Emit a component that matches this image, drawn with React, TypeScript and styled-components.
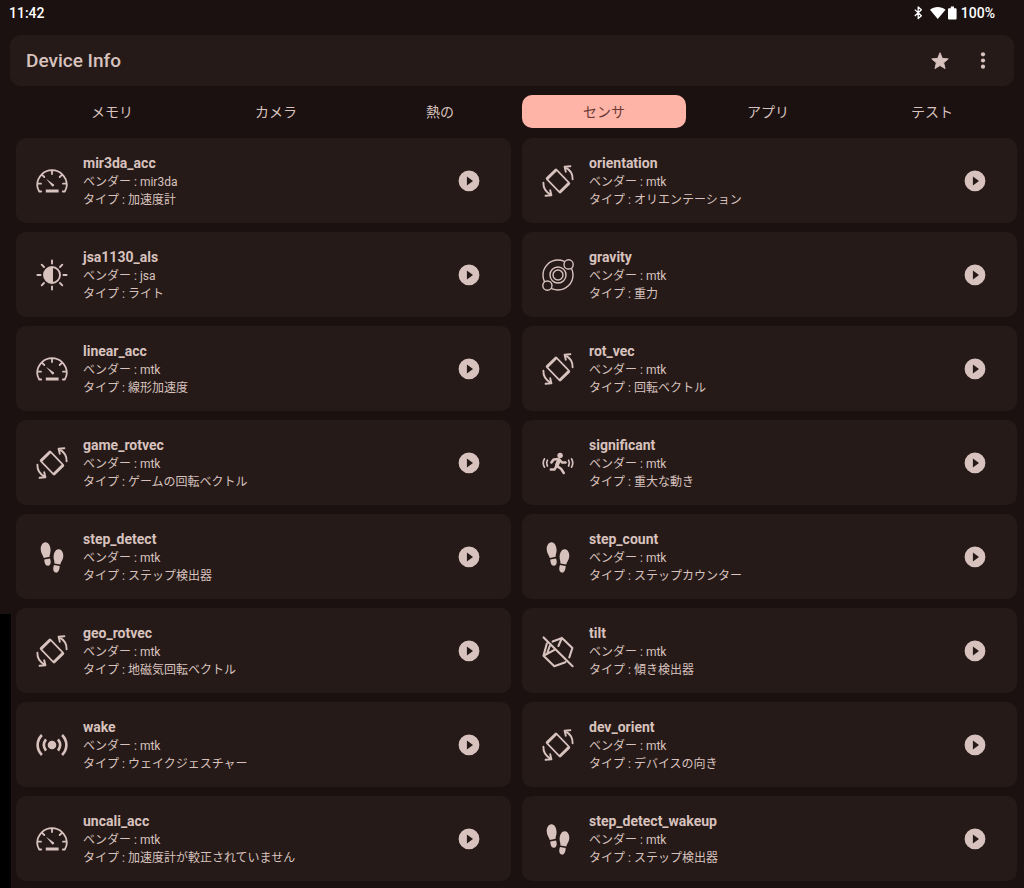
import React from "react";
import styled, { createGlobalStyle } from "styled-components";

const color = {
  page: "#1b1110",
  card: "#251a18",
  text: "#d8c2be",
  accent: "#ffb4a8",
  onAccent: "#6b3a34",
};

const GlobalStyle = createGlobalStyle`
  * { box-sizing: border-box; }
  body {
    margin: 0;
    background: ${color.page};
    color: ${color.text};
    font-family: Roboto, "Noto Sans CJK JP", sans-serif;
  }
  button { font: inherit; color: inherit; background: none; border: 0; padding: 0; cursor: pointer; }
  svg { display: block; }
`;

const Page = styled.div`
  position: relative;
  min-height: 100vh;
  overflow: hidden;
`;

const EdgeStrip = styled.div`
  position: absolute;
  left: 0;
  bottom: 0;
  width: 11px;
  height: 274px;
  background: #000;
`;

const StatusBar = styled.div`
  display: flex;
  align-items: center;
  justify-content: space-between;
  height: 26px;
  padding: 0 29px 0 9px;
  color: #fff;
  font-size: 14px;
  font-weight: 500;
`;

const StatusIcons = styled.div`
  display: flex;
  align-items: center;
  gap: 4px;
`;

const AppBar = styled.header`
  display: flex;
  align-items: center;
  height: 51px;
  margin: 9px 10px 0;
  padding: 0 20px 0 16px;
  border-radius: 10px;
  background: ${color.card};
`;

const Title = styled.h1`
  flex: 1;
  margin: 0;
  font-size: 19px;
  line-height: 24px;
  font-weight: 500;
`;

const Actions = styled.div`
  display: flex;
  gap: 21px;
`;

const IconButton = styled.button`
  display: grid;
  place-items: center;
  width: 22px;
  height: 22px;
`;

const Tabs = styled.nav`
  display: grid;
  grid-template-columns: repeat(6, 1fr);
  margin: 9px 10px 0 30px;
`;

const Tab = styled.button<{ $active?: boolean }>`
  && {
    height: 33px;
    border-radius: 10px;
    font-size: 14px;
    line-height: 20px;
    background: ${(p) => (p.$active ? color.accent : "transparent")};
    color: ${(p) => (p.$active ? color.onAccent : color.text)};
  }
`;

const Grid = styled.main`
  display: grid;
  grid-template-columns: repeat(2, 1fr);
  gap: 9px 11px;
  padding: 10px 7px 7px 16px;
`;

const Card = styled.article`
  display: flex;
  align-items: center;
  height: 85px;
  padding: 0 31px 0 20px;
  border-radius: 10px;
  background: ${color.card};
`;

const Details = styled.div`
  flex: 1;
  margin-left: 15px;
  padding-top: 2px;
`;

const Name = styled.h2`
  margin: 0;
  font-size: 14px;
  line-height: 19px;
  font-weight: 700;
`;

const Line = styled.p`
  margin: 0;
  font-size: 12px;
  line-height: 18px;
`;

const stroke = { fill: "none", stroke: "currentColor", strokeLinecap: "round", strokeLinejoin: "round" } as const;

type Kind = "gauge" | "rotate" | "light" | "gravity" | "run" | "steps" | "tilt" | "wake";

const drawings: Record<Kind, React.ReactNode> = {
  gauge: (
    <>
      <path {...stroke} strokeWidth="1.8" d="M5.2 26.5 H3.2 C1.8 24.2 1.2 22 1.2 20 A14.8 14.8 0 0 1 30.8 20 C30.8 22 30.2 24.2 28.8 26.5 H26.8 M16 5.4 V9 M1.5 18.7 H5 M30.5 18.7 H27 M5.9 9.6 L8.3 12 M26.1 9.6 L23.7 12" />
      <path fill="currentColor" d="M10 13.8 L18 19.4 A1.4 1.4 0 0 1 16.1 21.3Z M9.8 24.6 H22.6 V27.6 H9.8Z" />
    </>
  ),
  rotate: (
    <>
      <path fill="currentColor" fillRule="evenodd" transform="rotate(-44 16 16)" d="M10.2 5.2 H21.8 A1.8 1.8 0 0 1 23.6 7 V25 A1.8 1.8 0 0 1 21.8 26.8 H10.2 A1.8 1.8 0 0 1 8.4 25 V7 A1.8 1.8 0 0 1 10.2 5.2Z M10.2 8.2 V23.8 H21.8 V8.2Z" />
      <path {...stroke} strokeWidth="1.9" d="M30.6 14.3 C30.8 9.5 28 4.8 23 2.2 M28.4 1.2 L22.6 1.7 L23.8 6.8 M1.4 17.7 C1.2 22.5 4 27.2 9 29.8 M3.6 30.8 L9.4 30.3 L8.2 25.2" />
    </>
  ),
  light: (
    <>
      <circle {...stroke} cx="16" cy="16" r="8" strokeWidth="1.9" />
      <path fill="currentColor" d="M17 8 H16 A8 8 0 0 0 16 24 H17Z" />
      <path {...stroke} strokeWidth="1.9" d="M16 1.4 V4.6 M16 27.4 V30.6 M1.4 16 H4.6 M27.4 16 H30.6 M5.7 5.7 L8 8 M24 24 L26.3 26.3 M26.3 5.7 L24 8 M5.7 26.3 L8 24" />
    </>
  ),
  gravity: (
    <g {...stroke} strokeWidth="1.4">
      <circle cx="16" cy="16" r="15" />
      <circle cx="16" cy="16" r="8" />
      <circle cx="16" cy="16" r="5" />
      <circle cx="26.6" cy="5.4" r="4.6" fill={color.card} />
      <circle cx="5.4" cy="26.6" r="4.6" fill={color.card} />
    </g>
  ),
  run: (
    <>
      <circle cx="18.1" cy="8.4" r="2.7" fill="currentColor" />
      <path {...stroke} strokeWidth="2.5" d="M16 12 L11.8 12.4 L9.4 15.4 M18 13.4 L20.2 15.6 H23.6 M14.2 19.4 L12.6 22.5 H8.8 M15.8 19.6 L19 21.8 L21.8 26" />
      <path {...stroke} strokeWidth="4" d="M17 13 L15 18" />
      <path {...stroke} strokeWidth="1.7" d="M5.4 13.2 C4.4 15 4.4 17 5.4 19 M2.4 11.8 C.9 14.5 .9 17.5 2.4 20.2 M26.6 13.2 C27.6 15 27.6 17 26.6 19 M29.6 11.8 C31.1 14.5 31.1 17.5 29.6 20.2" />
    </>
  ),
  steps: (
    <g fill="currentColor">
      <path d="M9.3 1.2 C12.7 1 14.5 5 14.6 9.2 C14.6 11.8 13.5 13.8 13.6 15.8 L7.8 17 C7.3 14.6 4.7 12.2 4.7 8.2 C4.7 4.5 6.5 1.4 9.3 1.2Z" />
      <path d="M8.3 18.6 L14 17.5 C15.2 20.5 15 24.3 12.2 24.8 C9.2 25.2 8.4 21.8 8.3 18.6Z" />
      <path d="M23 8.3 C26 8.6 27.5 12 27.3 15.6 C27.1 19 24.8 21 24.3 23.5 L18.4 22.4 C18.7 20.4 17.5 18.5 17.6 15.8 C17.8 11.5 19.8 8 23 8.3Z" />
      <path d="M18 24 L23.7 25.1 C23.5 28.5 22.6 32 19.7 31.6 C16.8 31.1 16.8 27 18 24Z" />
    </g>
  ),
  tilt: (
    <path {...stroke} strokeWidth="2.1" d="M1.6 2.4 L30.6 31.2 M10.6 6.6 L20 2.9 L30.4 13 L27.3 22.4 M23.4 27.2 L12.3 31.2 L1.5 20.7 L4.8 8.6 M1.5 20.7 L13 14.6 M8.5 9 L5.4 17.5 M20 2.9 L16.4 11" />
  ),
  wake: (
    <>
      <circle cx="16" cy="16" r="4.3" fill="currentColor" />
      <path {...stroke} strokeLinecap="butt" strokeWidth="2.6" d="M10 10.4 C7.2 14 7.2 18 10 21.6 M5.9 6 C.2 12 .2 20 5.9 26 M22 10.4 C24.8 14 24.8 18 22 21.6 M26.1 6 C31.8 12 31.8 20 26.1 26" />
    </>
  ),
};

const SensorIcon = ({ kind }: { kind: Kind }) => (
  <svg width="32" height="32" viewBox="0 0 32 32" overflow="visible" aria-hidden="true">
    {drawings[kind]}
  </svg>
);

const sensors: [string, string, string, Kind][] = [
  ["mir3da_acc", "mir3da", "加速度計", "gauge"],
  ["orientation", "mtk", "オリエンテーション", "rotate"],
  ["jsa1130_als", "jsa", "ライト", "light"],
  ["gravity", "mtk", "重力", "gravity"],
  ["linear_acc", "mtk", "線形加速度", "gauge"],
  ["rot_vec", "mtk", "回転ベクトル", "rotate"],
  ["game_rotvec", "mtk", "ゲームの回転ベクトル", "rotate"],
  ["significant", "mtk", "重大な動き", "run"],
  ["step_detect", "mtk", "ステップ検出器", "steps"],
  ["step_count", "mtk", "ステップカウンター", "steps"],
  ["geo_rotvec", "mtk", "地磁気回転ベクトル", "rotate"],
  ["tilt", "mtk", "傾き検出器", "tilt"],
  ["wake", "mtk", "ウェイクジェスチャー", "wake"],
  ["dev_orient", "mtk", "デバイスの向き", "rotate"],
  ["uncali_acc", "mtk", "加速度計が較正されていません", "gauge"],
  ["step_detect_wakeup", "mtk", "ステップ検出器", "steps"],
];

const tabs = ["メモリ", "カメラ", "熱の", "センサ", "アプリ", "テスト"];

export default function App() {
  return (
    <Page lang="ja">
      <GlobalStyle />
      <EdgeStrip />
      <StatusBar>
        <span>11:42</span>
        <StatusIcons>
          <svg width="44" height="16" viewBox="0 0 44 16" aria-hidden="true">
            <path {...stroke} strokeWidth="1.3" strokeLinecap="butt" d="M1.8 4.6 L8.4 10.8 L5.2 13.6 V2 L8.4 4.8 L1.8 11" />
            <path fill="currentColor" d="M17 4.8 C21.5 1.1 28 1.1 32.5 4.8 L24.75 14Z M36 3.2 H37.8 V1.6 H41 V3.2 H42.6 Q43.6 3.2 43.6 4.2 V13.6 Q43.6 14.6 42.6 14.6 H36 Q35 14.6 35 13.6 V4.2 Q35 3.2 36 3.2Z" />
          </svg>
          <span>100%</span>
        </StatusIcons>
      </StatusBar>
      <AppBar>
        <Title>Device Info</Title>
        <Actions>
          <IconButton aria-label="お気に入り">
            <svg width="22" height="22" viewBox="0 0 24 24" fill="currentColor" stroke="currentColor" strokeLinejoin="round" aria-hidden="true">
              <path d="M12 16.9 17.5 20.3 16 14 21 9.7 14.5 9.1 12 3 9.5 9.1 3 9.7 8 14 6.5 20.3Z" />
            </svg>
          </IconButton>
          <IconButton aria-label="メニュー">
            <svg width="22" height="22" viewBox="0 0 22 22" fill="currentColor" aria-hidden="true">
              <circle cx="11" cy="4.3" r="2.1" />
              <circle cx="11" cy="10.5" r="2.1" />
              <circle cx="11" cy="16.7" r="2.1" />
            </svg>
          </IconButton>
        </Actions>
      </AppBar>
      <Tabs>
        {tabs.map((t) => (
          <Tab key={t} $active={t === "センサ"} aria-current={t === "センサ" ? "page" : undefined}>
            {t}
          </Tab>
        ))}
      </Tabs>
      <Grid>
        {sensors.map(([name, vendor, type, kind]) => (
          <Card key={name}>
            <SensorIcon kind={kind} />
            <Details>
              <Name>{name}</Name>
              <Line>ベンダー : {vendor}</Line>
              <Line>タイプ : {type}</Line>
            </Details>
            <IconButton aria-label={`${name} を開く`}>
              <svg width="22" height="22" viewBox="0 0 22 22" fill="currentColor" aria-hidden="true">
                <path fillRule="evenodd" d="M11 .5 A10.4 10.4 0 1 1 11 21.3 A10.4 10.4 0 1 1 11 .5Z M8.9 6.4 V15.4 L15 10.9Z" />
              </svg>
            </IconButton>
          </Card>
        ))}
      </Grid>
    </Page>
  );
}
